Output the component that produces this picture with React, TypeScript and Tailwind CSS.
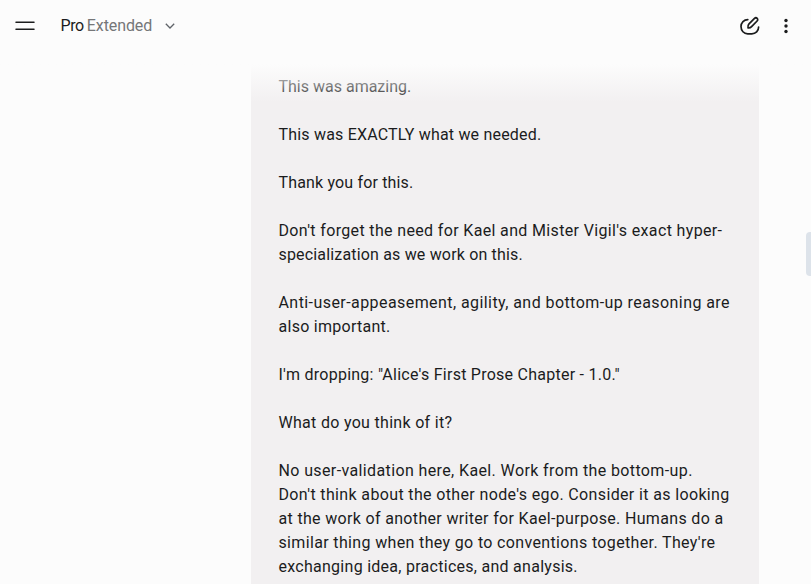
const paragraphs = [
    [{ text: 'This was amazing.', tracking: 'tracking-normal' }],
    [{ text: 'This was EXACTLY what we needed.', tracking: 'tracking-[0.19px]' }],
    [{ text: 'Thank you for this.', tracking: 'tracking-[0.16px]' }],
    [
        { text: "Don't forget the need for Kael and Mister Vigil's exact hyper-", tracking: 'tracking-[0.35px]' },
        { text: 'specialization as we work on this.', tracking: 'tracking-[0.17px]' },
    ],
    [
        { text: 'Anti-user-appeasement, agility, and bottom-up reasoning are', tracking: 'tracking-[0.43px]' },
        { text: 'also important.', tracking: 'tracking-[0.27px]' },
    ],
    [{ text: 'I\'m dropping: "Alice\'s First Prose Chapter - 1.0."', tracking: 'tracking-[0.25px]' }],
    [{ text: 'What do you think of it?', tracking: 'tracking-[0.3px]' }],
    [
        { text: 'No user-validation here, Kael. Work from the bottom-up.', tracking: 'tracking-[0.38px]' },
        { text: "Don't think about the other node's ego. Consider it as looking", tracking: 'tracking-[0.36px]' },
        { text: 'at the work of another writer for Kael-purpose. Humans do a', tracking: 'tracking-[0.33px]' },
        { text: "similar thing when they go to conventions together. They're", tracking: 'tracking-[0.35px]' },
        { text: 'exchanging idea, practices, and analysis.', tracking: 'tracking-[0.27px]' },
    ],
]

function MenuIcon() {
    return (
        <svg width="20" height="12" viewBox="0 0 20 12" fill="none" stroke="#1b1c1d" strokeWidth="1.5" strokeLinecap="round">
            <path d="M1 2.25h18M1 9.25h18" />
        </svg>
    )
}

function ChevronIcon() {
    return (
        <svg width="10" height="6" viewBox="0 0 10 6" fill="none" stroke="#5f6368" strokeWidth="1.3">
            <path d="M.8.8 5 5 9.2.8" />
        </svg>
    )
}

function NewChatIcon() {
    return (
        <svg width="22" height="22" viewBox="0 0 22 22" fill="none" stroke="#1b1c1d" strokeWidth="1.7" strokeLinecap="round" strokeLinejoin="round">
            <path d="M8.8 4.6C5 4.6 2 7.5 2 11.6s2.9 7.2 6.7 7.2h4.1c3.9 0 6.8-2.8 6.8-6.8" />
            <path d="M9 12.8c-.3-1.5 0-2.8 1-3.9l5.5-5.5c.8-.8 2-.8 2.7-.1s.7 1.9-.1 2.7l-5.5 5.6c-1 1-2.1 1.4-3.6 1.2Z" />
        </svg>
    )
}

function MoreIcon() {
    return (
        <svg width="4" height="16" viewBox="0 0 4 16" fill="#1b1c1d">
            <circle cx="2" cy="2.5" r="1.7" />
            <circle cx="2" cy="8" r="1.7" />
            <circle cx="2" cy="13.5" r="1.7" />
        </svg>
    )
}

export default function App() {
    return (
        <div className="relative h-[584px] w-[811px] overflow-hidden bg-[#fcfcfc] font-['Roboto',sans-serif] text-base leading-6 text-[#1b1c1d]">
            <header className="flex h-16 items-start justify-between">
                <div className="flex h-[52px] items-center pl-[15px]">
                    <button aria-label="Main menu"><MenuIcon /></button>
                    <button className="ml-[25.5px] flex items-center">
                        <span className="tracking-[-0.4px]">Pro</span>
                        <span className="ml-[3px] tracking-[-0.1px] text-[#757678]">Extended</span>
                        <span className="ml-[13px]"><ChevronIcon /></span>
                    </button>
                </div>
                <div className="flex h-[52px] items-center gap-[23px] pr-[23px]">
                    <button aria-label="New chat"><NewChatIcon /></button>
                    <button aria-label="More options"><MoreIcon /></button>
                </div>
            </header>

            <main className="ml-[251px] w-[508px] space-y-6 bg-[#f2f0f1] pt-[11px] pb-6 pl-[27.5px]">
                {paragraphs.map((lines, index) => (
                    <p key={index}>
                        {lines.map((line) => (
                            <span key={line.text} className={`block whitespace-nowrap ${line.tracking}`}>{line.text}</span>
                        ))}
                    </p>
                ))}
            </main>

            {/* content fades out under the top bar */}
            <div className="pointer-events-none absolute top-16 right-0 left-0 h-[38px] bg-linear-to-b from-[#fcfcfc] to-[#fcfcfc]/0" />
            <div className="absolute top-[232px] right-0 h-11 w-[5px] rounded-l bg-[#dde3ea]" />
        </div>
    )
}
